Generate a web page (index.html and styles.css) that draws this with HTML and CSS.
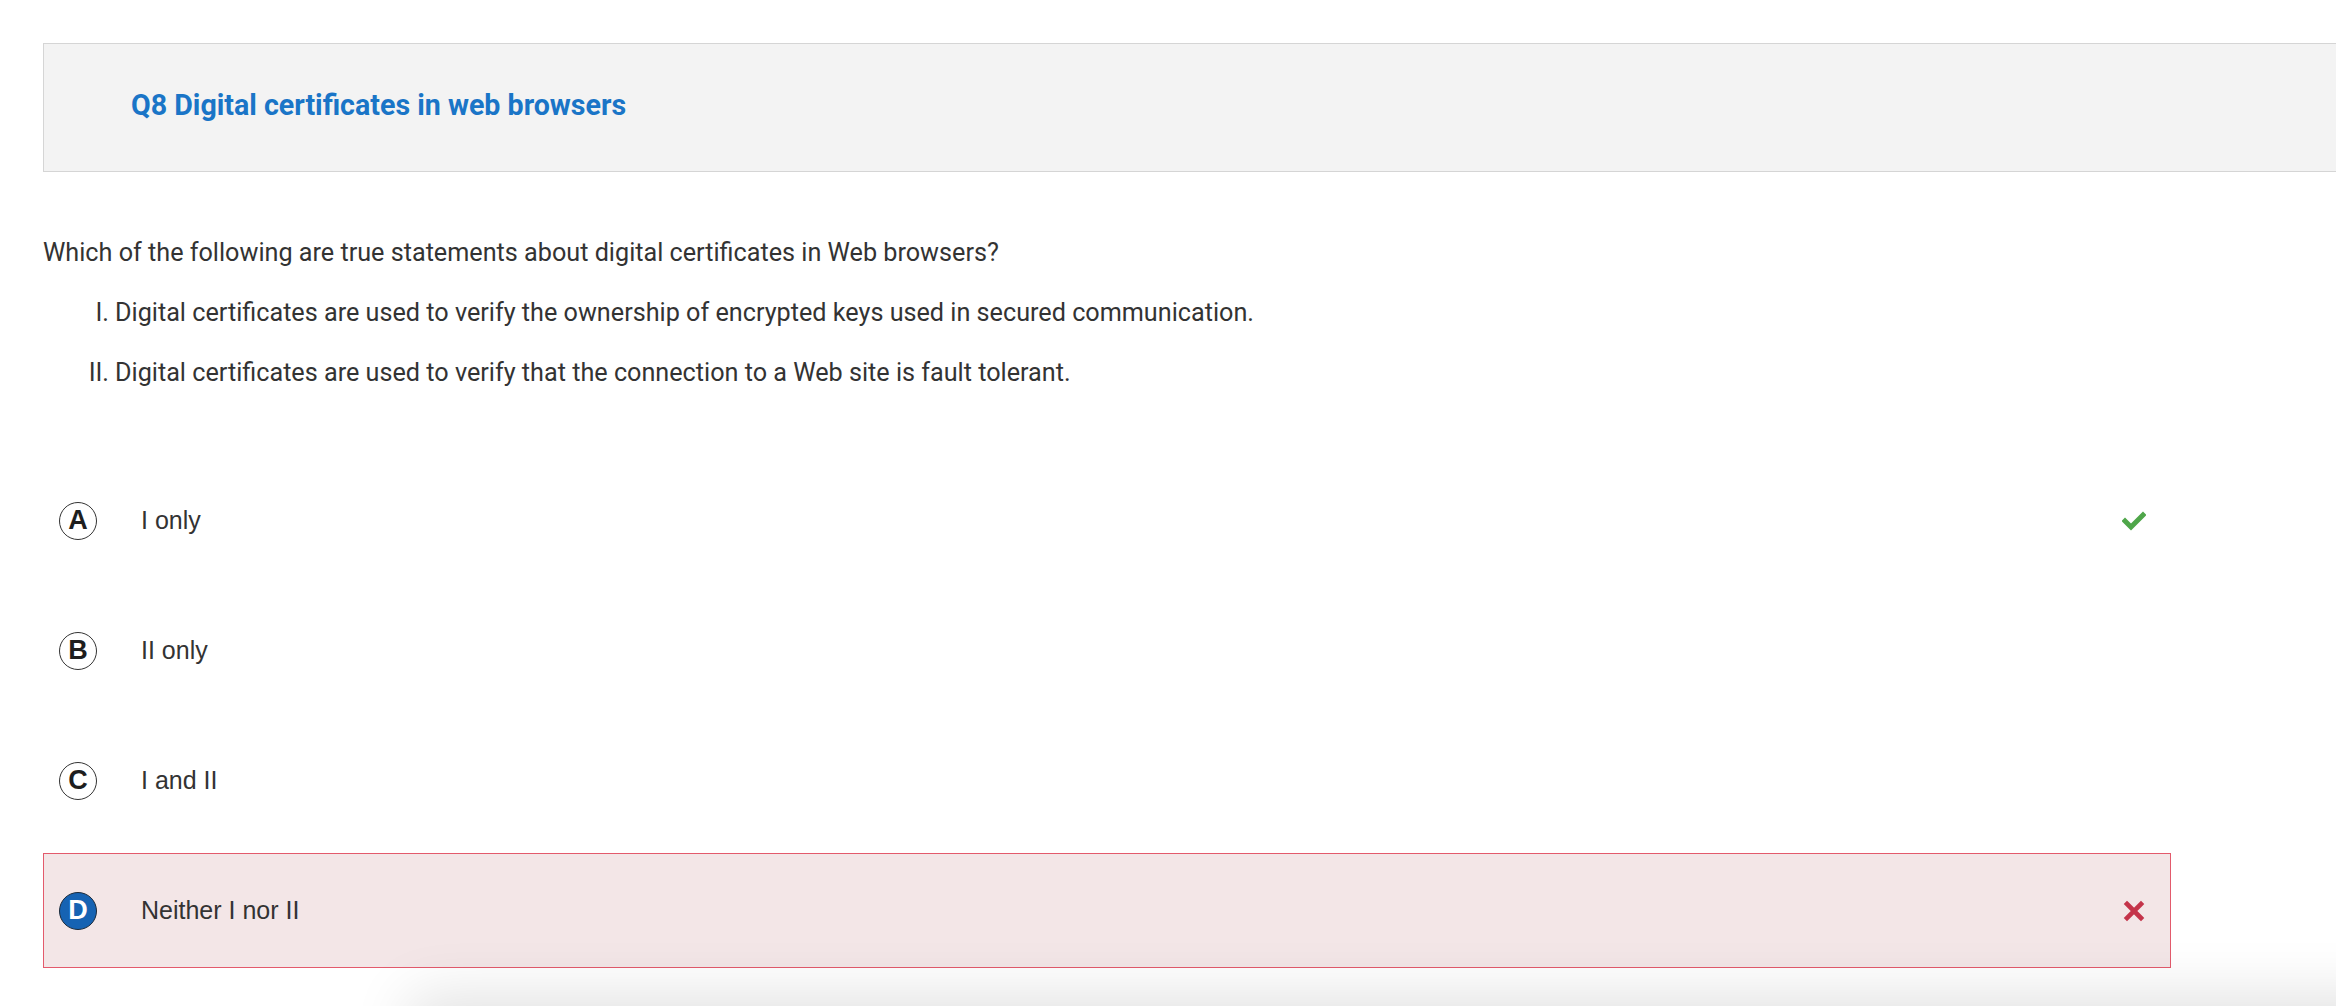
FILE: index.html
```html
<!DOCTYPE html>
<html lang="en">
<head>
<meta charset="utf-8">
<title>Q8 Digital certificates in web browsers</title>
<link rel="stylesheet" href="styles.css">
</head>
<body>
<main class="page">
  <header class="q-header">
    <h1 class="q-title">Q8 Digital certificates in web browsers</h1>
  </header>

  <section class="q-body">
    <p class="q-stem">Which of the following are true statements about digital certificates in Web browsers?</p>
    <div class="q-stmt"><span class="q-num">I.</span><span>Digital certificates are used to verify the ownership of encrypted keys used in secured communication.</span></div>
    <div class="q-stmt"><span class="q-num">II.</span><span>Digital certificates are used to verify that the connection to a Web site is fault tolerant.</span></div>
  </section>

  <section class="options">
    <div class="option">
      <span class="badge">A</span>
      <span class="opt-text">I only</span>
      <svg class="mark" width="24" height="20" viewBox="0 0 24 20"><path d="M3 10 L9 16 L21 4" fill="none" stroke="#4fa64a" stroke-width="5" stroke-linecap="square"/></svg>
    </div>
    <div class="option">
      <span class="badge">B</span>
      <span class="opt-text">II only</span>
    </div>
    <div class="option">
      <span class="badge">C</span>
      <span class="opt-text">I and II</span>
    </div>
    <div class="option option-wrong">
      <span class="badge badge-selected">D</span>
      <span class="opt-text">Neither I nor II</span>
      <svg class="mark" width="24" height="22" viewBox="0 0 24 22"><path d="M5 4 L19 18 M19 4 L5 18" fill="none" stroke="#c4344a" stroke-width="4.6" stroke-linecap="square"/></svg>
    </div>
  </section>
</main>
<div class="bottom-shade"></div>
</body>
</html>
```

FILE: styles.css
```css
html, body {
  margin: 0;
  padding: 0;
  background: #ffffff;
  overflow: hidden;
}

.page {
  padding: 43px 0 0 43px;
  font-family: Roboto, "Liberation Sans", sans-serif;
  color: #333333;
}

.q-header {
  box-sizing: border-box;
  height: 129px;
  margin-right: -20px;
  background: #f3f3f3;
  border: 1px solid #d5d5d5;
  display: flex;
  align-items: center;
  padding: 0 0 6px 87px;
}

.q-title {
  margin: 0;
  font-family: Roboto, "Liberation Sans", sans-serif;
  font-weight: 700;
  font-size: 28.6px;
  color: #1a75c7;
}

.q-body {
  padding-top: 63px;
  font-size: 25.2px;
  line-height: 36px;
  color: #333333;
}

.q-stem {
  margin: 0 0 24px 0;
}

.q-stmt {
  display: flex;
  margin-bottom: 24px;
}

.q-num {
  width: 66px;
  text-align: right;
  padding-right: 6px;
  flex: none;
}

.options {
  margin-top: 72px;
  width: 2128px;
  display: flex;
  flex-direction: column;
  gap: 15px;
}

.option {
  box-sizing: border-box;
  height: 115px;
  display: flex;
  align-items: center;
  padding: 0 24px 0 15px;
  border: 1px solid transparent;
  font-family: "Liberation Sans", Arial, sans-serif;
}

.option-wrong {
  background: #f3e6e7;
  border-color: #e35a6c;
}

.badge {
  box-sizing: border-box;
  width: 38px;
  height: 38px;
  border-radius: 50%;
  border: 1px solid #333333;
  display: flex;
  align-items: center;
  justify-content: center;
  font-weight: 700;
  font-size: 27px;
  color: #1e1e1e;
  flex: none;
}

.badge-selected {
  background: #1663b3;
  color: #ffffff;
  border-color: #1b2a3a;
}

.opt-text {
  margin-left: 44px;
  font-size: 25px;
  color: #333333;
  flex: 1;
}

.mark {
  flex: none;
}

.bottom-shade {
  position: fixed;
  left: 420px;
  right: -60px;
  bottom: -60px;
  height: 60px;
  box-shadow: 0 0 60px 10px rgba(0, 0, 0, 0.12);
  background: #e8e8e8;
}
```
